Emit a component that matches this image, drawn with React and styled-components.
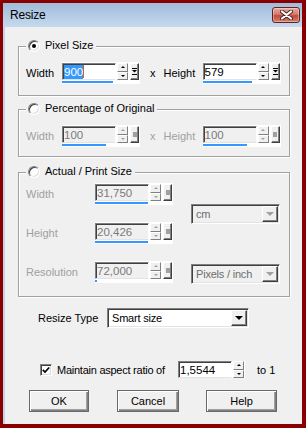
import React from 'react';
import styled, { createGlobalStyle } from 'styled-components';

const Global = createGlobalStyle`
  html, body { margin: 0; padding: 0; background: #8a0000; }
  body { font-family: "Liberation Sans", Arial, sans-serif; }
  * { box-sizing: border-box; }
`;

const Frame = styled.div`
  width: 306px;
  height: 428px;
  padding: 3px 4px 4px 3px;
  background: #8a0000;
  display: flex;
`;

const Window = styled.div`
  flex: 1;
  display: flex;
  flex-direction: column;
  background: #f0f0f0;
`;

const TitleBar = styled.div`
  height: 24px;
  flex: none;
  display: flex;
  align-items: center;
  justify-content: space-between;
  padding-left: 7px;
  background: linear-gradient(#a0bbd9, #c6daef);
`;

const Title = styled.span`
  font-size: 12px;
  color: #000;
  letter-spacing: -0.2px;
`;

const CloseBtn = styled.div`
  align-self: flex-start;
  margin-top: 4px;
  margin-right: 2px;
  width: 28px;
  height: 16px;
  border: 1px solid #5e2420;
  border-radius: 3px;
  background: linear-gradient(#e9aca2, #d47a6c 45%, #c24a38 55%, #d4806f);
  box-shadow: inset 0 0 0 1px rgba(255, 255, 255, 0.35);
  display: flex;
  align-items: center;
  justify-content: center;
`;

const Body = styled.div`
  flex: 1;
  display: flex;
  flex-direction: column;
  align-items: flex-start;
  padding: 19px 11px 0 13px;
  border-left: 2px solid #c2d6eb;
`;

const Group = styled.div`
  position: relative;
  width: 272px;
  border: 1px solid #a0a0a0;
  box-shadow: inset 1px 1px 0 #fff, 1px 1px 0 #fff;
  padding: ${(p) => p.$pad};
  margin-top: ${(p) => p.$mt || 0}px;
`;

const Legend = styled.div`
  position: absolute;
  top: -8px;
  left: 7px;
  display: flex;
  align-items: center;
  gap: 5px;
  padding: 0 3px 0 2px;
  background: #f0f0f0;
  font-size: 11px;
  line-height: 13px;
  color: #000;
`;

const Radio = styled.span`
  width: 12px;
  height: 12px;
  border-radius: 50%;
  background: #fff;
  border: 1px solid;
  border-color: #808080 #fff #fff #808080;
  box-shadow: inset 1px 1px 0 #404040, inset -1px -1px 0 #dcdcdc;
  display: flex;
  align-items: center;
  justify-content: center;
  &::after {
    content: '';
    width: 4px;
    height: 4px;
    border-radius: 50%;
    background: #000;
    display: ${(p) => (p.$checked ? 'block' : 'none')};
  }
`;

const Row = styled.div`
  display: flex;
  align-items: center;
  margin-top: ${(p) => p.$mt || 0}px;
  margin-left: ${(p) => p.$ml || 0}px;
`;

const Label = styled.span`
  flex: none;
  width: ${(p) => (p.$w ? `${p.$w}px` : 'auto')};
  margin-left: ${(p) => p.$ml || 0}px;
  font-size: 11px;
  letter-spacing: ${(p) => p.$ls || 0}px;
  color: ${(p) => (p.$disabled ? '#a0a0a0' : '#000')};
  white-space: nowrap;
`;

const SpinBox = styled.div`
  flex: none;
  display: inline-flex;
  flex-direction: column;
  width: ${(p) => p.$w}px;
  background: #fff;
  padding: ${(p) => (p.$underline ? '1px 1px 1px 0' : '0 1px 0 0')};
`;

const SpinTop = styled.div`
  display: flex;
  height: 17px;
`;

const Field = styled.div`
  flex: 1;
  height: 17px;
  display: flex;
  align-items: center;
  padding-left: 1px;
  border-top: 1px solid #808080;
  border-left: 1px solid #808080;
  border-bottom: 1px solid #e3e3e3;
  border-right: 1px solid #fff;
  box-shadow: inset 1px 1px 0 #404040;
  background: ${(p) => (p.$disabled ? '#f0f0f0' : '#fff')};
  color: ${(p) => (p.$disabled ? '#7a7a7a' : '#000')};
  font-size: 11.5px;
  line-height: 14px;
  white-space: nowrap;
  overflow: hidden;
`;

const Sel = styled.span`
  background: #3399ff;
  color: #fff;
  line-height: 14px;
`;

const Caret = styled.span`
  width: 1px;
  height: 13px;
  background: #d06010;
`;

const Arrows = styled.div`
  width: 11px;
  margin-left: 1px;
  display: flex;
  flex-direction: column;
`;

const ArrowBtn = styled.div`
  flex: 1;
  background: #f0f0f0;
  border: 1px solid;
  border-color: #fff #808080 #808080 #fff;
  display: flex;
  align-items: center;
  justify-content: center;
`;

const Tri = styled.span`
  width: 0;
  height: 0;
  border-left: 2px solid transparent;
  border-right: 2px solid transparent;
  ${(p) => (p.$up ? 'border-bottom' : 'border-top')}: 2px solid ${(p) => (p.$disabled ? '#a0a0a0' : '#000')};
`;

const MaxBtn = styled.div`
  width: 9px;
  margin-left: 2px;
  background: #f0f0f0;
  border: 1px solid;
  border-color: #fff #404040 #404040 #fff;
  box-shadow: inset -1px -1px 0 #808080;
  display: flex;
  align-items: center;
  justify-content: center;
`;

const GreySq = styled.span`
  width: 4px;
  height: 5px;
  background: #a0a0a0;
`;

const Bar = styled.div`
  height: 2px;
  margin-top: 1px;
  background: #3399ff;
`;

const PrintGrid = styled.div`
  display: grid;
  grid-template-columns: 69px 96px 89px;
  grid-template-rows: 22px 22px 22px;
  row-gap: 17px;
  align-items: center;
`;

const Combo = styled.div`
  width: ${(p) => p.$w}px;
  height: 20px;
  display: flex;
  border-top: 1px solid #808080;
  border-left: 1px solid #808080;
  border-bottom: 1px solid #fff;
  border-right: 1px solid #fff;
  box-shadow: inset 1px 1px 0 #404040, inset -1px -1px 0 #e3e3e3;
  background: ${(p) => (p.$disabled ? '#f0f0f0' : '#fff')};
  padding: 1px;
  grid-row: ${(p) => p.$row || 'auto'};
  grid-column: ${(p) => p.$col || 'auto'};
  margin-top: ${(p) => p.$mt || 0}px;
  align-self: ${(p) => p.$align || 'center'};
`;

const ComboText = styled.span`
  flex: 1;
  padding-left: 3px;
  font-size: 11px;
  letter-spacing: -0.2px;
  line-height: 16px;
  color: ${(p) => (p.$disabled ? '#6d6d6d' : '#000')};
  white-space: nowrap;
  overflow: hidden;
`;

const DropBtn = styled.div`
  width: 16px;
  flex: none;
  background: #f0f0f0;
  border: 1px solid;
  border-color: #fff #404040 #404040 #fff;
  box-shadow: inset -1px -1px 0 #808080;
  display: flex;
  align-items: center;
  justify-content: center;
`;

const DropTri = styled.span`
  width: 0;
  height: 0;
  border-left: 4px solid transparent;
  border-right: 4px solid transparent;
  border-top: 4px solid ${(p) => (p.$disabled ? '#a0a0a0' : '#000')};
`;

const CheckBox = styled.span`
  flex: none;
  width: 12px;
  height: 12px;
  background: #fff;
  border: 1px solid;
  border-color: #808080 #fff #fff #808080;
  box-shadow: inset 1px 1px 0 #404040, inset -1px -1px 0 #dcdcdc;
  display: flex;
  align-items: center;
  justify-content: center;
  margin-right: 5px;
`;

const Button = styled.div`
  width: ${(p) => p.$w}px;
  height: 22px;
  margin-left: ${(p) => p.$ml || 0}px;
  display: flex;
  align-items: center;
  justify-content: center;
  background: #f0f0f0;
  border: 1px solid #696969;
  box-shadow: inset 1px 1px 0 #fff, inset -1px -1px 0 #808080, inset -2px -2px 0 #a0a0a0;
  font-size: 11px;
  color: #000;
`;

const Spin = ({ value, selected, disabled, bar = 0, max = true, underline = true, width = 78 }) => (
  <SpinBox $w={width} $underline={underline}>
    <SpinTop>
      <Field $disabled={disabled}>
        {selected ? (
          <>
            <Sel>{value}</Sel>
            <Caret />
          </>
        ) : (
          value
        )}
      </Field>
      <Arrows>
        <ArrowBtn>
          <Tri $up $disabled={disabled} />
        </ArrowBtn>
        <ArrowBtn>
          <Tri $disabled={disabled} />
        </ArrowBtn>
      </Arrows>
      {max && (
        <MaxBtn>
          {disabled ? (
            <GreySq />
          ) : (
            <svg width="5" height="7" viewBox="0 0 5 7">
              <rect x="0" y="0" width="5" height="1" fill="#000" />
              <polygon points="0,2 5,2 2.5,4.6" fill="#000" />
              <rect x="0" y="6" width="5" height="1" fill="#000" />
            </svg>
          )}
        </MaxBtn>
      )}
    </SpinTop>
    {underline && <Bar style={{ width: bar }} />}
  </SpinBox>
);

const Select = ({ text, disabled, w, ...rest }) => (
  <Combo $w={w} $disabled={disabled} {...rest}>
    <ComboText $disabled={disabled}>{text}</ComboText>
    <DropBtn>
      <DropTri $disabled={disabled} />
    </DropBtn>
  </Combo>
);

export default function App() {
  return (
    <>
      <Global />
      <Frame>
        <Window>
          <TitleBar>
            <Title>Resize</Title>
            <CloseBtn>
              <svg width="13" height="10" viewBox="0 0 13 10">
                <path d="M2 1.5 L11 8.5 M11 1.5 L2 8.5" stroke="#4a2424" strokeWidth="4" strokeLinecap="round" />
                <path d="M2 1.5 L11 8.5 M11 1.5 L2 8.5" stroke="#fff" strokeWidth="2.2" strokeLinecap="round" />
              </svg>
            </CloseBtn>
          </TitleBar>
          <Body>
            <Group $pad="15px 7px 11px">
              <Legend>
                <Radio $checked />
                Pixel Size
              </Legend>
              <Row>
                <Label $w={36}>Width</Label>
                <Spin value="900" selected bar={51} />
                <Label $ml={10}>x</Label>
                <Label $w={39} $ml={8}>Height</Label>
                <Spin value="579" bar={49} />
              </Row>
            </Group>

            <Group $pad="15px 7px 9px" $mt={13}>
              <Legend>
                <Radio />
                Percentage of Original
              </Legend>
              <Row>
                <Label $w={36} $disabled>Width</Label>
                <Spin value="100" disabled bar={44} />
                <Label $ml={10} $disabled>x</Label>
                <Label $w={39} $ml={8} $disabled>Height</Label>
                <Spin value="100" disabled bar={44} />
              </Row>
            </Group>

            <Group $pad="10px 7px 13px" $mt={15}>
              <Legend>
                <Radio />
                Actual / Print Size
              </Legend>
              <PrintGrid>
                <Label $disabled>Width</Label>
                <Spin value="31,750" disabled bar={53} />
                <Select text="cm" disabled w={89} $row="1 / span 2" $col="3" />
                <Label $disabled>Height</Label>
                <Spin value="20,426" disabled bar={53} />
                <Label $disabled>Resolution</Label>
                <Spin value="72,000" disabled bar={2} />
                <Select text="Pixels / inch" disabled w={89} $row="3" $col="3" $align="start" $mt={3} />
              </PrintGrid>
            </Group>

            <Row $mt={11} $ml={20}>
              <Label $w={69}>Resize Type</Label>
              <Select text="Smart size" w={142} />
            </Row>

            <Row $mt={33} $ml={22}>
              <CheckBox>
                <svg width="8" height="8" viewBox="0 0 8 8">
                  <path d="M0.8 3.8 L3 6 L7.2 1.5" stroke="#000" strokeWidth="1.7" fill="none" />
                </svg>
              </CheckBox>
              <Label $w={121} $ls={-0.25}>Maintain aspect ratio of</Label>
              <Spin value="1,5544" max={false} underline={false} width={67} />
              <Label $ml={12}>to 1</Label>
            </Row>

            <Row $mt={12} $ml={11}>
              <Button $w={60}>OK</Button>
              <Button $w={62} $ml={28}>Cancel</Button>
              <Button $w={71} $ml={27}>Help</Button>
            </Row>
          </Body>
        </Window>
      </Frame>
    </>
  );
}
